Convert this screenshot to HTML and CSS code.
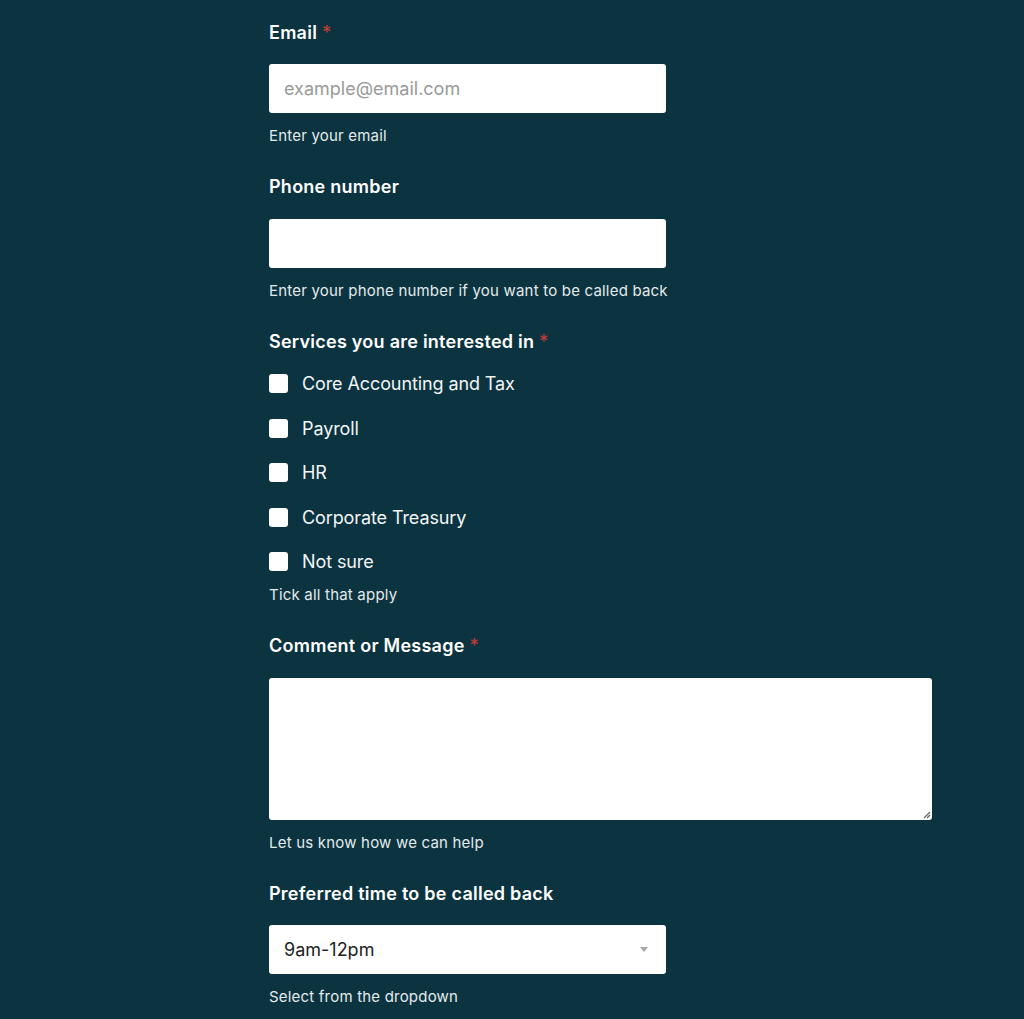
FILE: index.html
```html
<!DOCTYPE html>
<html>
<head>
<meta charset="utf-8">
<link rel="stylesheet" href="styles.css">
</head>
<body>
<form class="form">
  <div class="field">
    <label class="label">Email <span class="req">*</span></label>
    <div class="input"><span class="placeholder">example@email.com</span></div>
    <p class="help">Enter your email</p>
  </div>
  <div class="field">
    <label class="label">Phone number</label>
    <div class="input"></div>
    <p class="help">Enter your phone number if you want to be called back</p>
  </div>
  <div class="field">
    <label class="label">Services you are interested in <span class="req">*</span></label>
    <div class="checks">
      <div class="check"><span class="box"></span><span>Core Accounting and Tax</span></div>
      <div class="check"><span class="box"></span><span>Payroll</span></div>
      <div class="check"><span class="box"></span><span>HR</span></div>
      <div class="check"><span class="box"></span><span>Corporate Treasury</span></div>
      <div class="check"><span class="box"></span><span>Not sure</span></div>
    </div>
    <p class="help help-tight">Tick all that apply</p>
  </div>
  <div class="field">
    <label class="label">Comment or Message <span class="req">*</span></label>
    <div class="textarea">
      <svg class="grip" width="10" height="10" viewBox="0 0 10 10"><path d="M9 3 L3 9 M9 6 L6 9" stroke="#666" stroke-width="1.2" fill="none"/></svg>
    </div>
    <p class="help">Let us know how we can help</p>
  </div>
  <div class="field">
    <label class="label">Preferred time to be called back</label>
    <div class="input select"><span class="value">9am-12pm</span><span class="arrow"></span></div>
    <p class="help">Select from the dropdown</p>
  </div>
</form>
</body>
</html>
```

FILE: styles.css
```css
html, body {
  margin: 0;
  padding: 0;
  background: #0b3440;
  height: 100%;
}
body {
  font-family: "Inter", "Noto Sans", sans-serif;
  color: #ffffff;
  overflow: hidden;
}
.form {
  padding: 20.5px 0 0 269px;
  display: flex;
  flex-direction: column;
  gap: 28px;
}
.field {
  display: flex;
  flex-direction: column;
}
.label {
  font-size: 18px;
  font-weight: 600;
  line-height: 24px;
  letter-spacing: 0.25px;
  margin-bottom: 19.5px;
}
.req {
  color: #c0393b;
  font-weight: 500;
}
.input {
  width: 397px;
  height: 49px;
  background: #ffffff;
  border-radius: 3px;
  box-sizing: border-box;
  padding: 0 15px;
  display: flex;
  align-items: center;
  font-size: 18px;
  color: #222;
}
.placeholder {
  color: #9a9a9a;
}
.help {
  margin: 12px 0 0 0;
  font-size: 15px;
  line-height: 22px;
  color: #e4eaec;
  font-weight: 400;
  letter-spacing: 0.2px;
}
.help-tight {
  margin-top: 0;
}
.checks {
  display: flex;
  flex-direction: column;
  margin-top: -11.5px;
}
.check {
  height: 44.5px;
  display: flex;
  align-items: center;
  gap: 14px;
  font-size: 18px;
  letter-spacing: -0.1px;
  color: #f2f5f6;
}
.box {
  width: 19px;
  height: 19px;
  background: #ffffff;
  border-radius: 3px;
  flex: none;
}
.textarea {
  width: 663px;
  height: 142px;
  background: #ffffff;
  border-radius: 3px;
  position: relative;
}
.grip {
  position: absolute;
  right: 1px;
  bottom: 1px;
}
.select {
  justify-content: space-between;
}
.arrow {
  width: 0;
  height: 0;
  border-left: 4px solid transparent;
  border-right: 4px solid transparent;
  border-top: 5px solid #a8a8a8;
  margin-right: 3px;
}
```
